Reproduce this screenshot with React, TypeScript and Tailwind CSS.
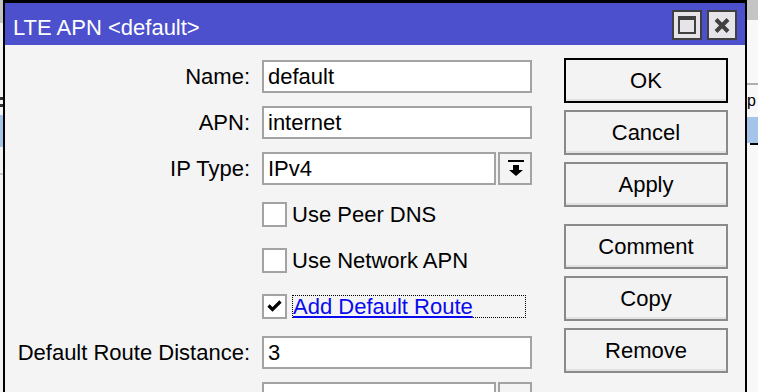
import React from 'react'

const font = { fontFamily: '"Liberation Sans", Arial, sans-serif' }

const Field = ({ value }: { value: string }) => (
  <div className="w-[270px] h-[33px] border-2 border-[#a3a3a3] bg-white flex items-center pl-[4px] pt-[1px] text-black">
    {value}
  </div>
)

const ComboField = ({ value, arrow = true }: { value: string; arrow?: boolean }) => (
  <div className="w-[270px] h-[33px] flex gap-[2px]">
    <div className="flex-1 h-full border-2 border-[#a3a3a3] bg-white flex items-center pl-[4px] pt-[1px] text-black">
      {value}
    </div>
    <div className="w-[34px] h-full border-2 border-[#a3a3a3] bg-[#f4f4f4] flex items-center justify-center">
      {arrow && (
        <svg width="16" height="16" viewBox="0 0 16 16" className="translate-x-[1px]">
          <rect x="0" y="0" width="16" height="2" fill="#000" />
          <rect x="5" y="5" width="6" height="5" fill="#000" />
          <path d="M1 10 H15 L8 16 Z" fill="#000" />
        </svg>
      )}
    </div>
  </div>
)

const Row = ({ label, children }: { label?: string; children: React.ReactNode }) => (
  <div className="h-[46px] flex items-center gap-[12px] shrink-0">
    <div className="w-[245px] text-right text-black whitespace-nowrap pt-[1px]">{label}</div>
    {children}
  </div>
)

const Check = ({ label, checked, focused }: { label: string; checked?: boolean; focused?: boolean }) => (
  <div className="flex items-center gap-[5px]">
    <div className="w-[25px] h-[25px] border-2 border-[#a3a3a3] bg-white flex items-center justify-center">
      {checked && (
        <svg width="15" height="12" viewBox="0 0 15 12">
          <path d="M1.5 5.5 L5.5 9.5 L13.5 1.5" stroke="#000" strokeWidth="3.2" fill="none" />
        </svg>
      )}
    </div>
    {focused ? (
      <div className="w-[234px] h-[23px] border border-dotted border-black flex items-center pt-[1px] text-[#0a0af0] underline underline-offset-2 whitespace-nowrap">
        {label}
      </div>
    ) : (
      <div className="text-black pt-[1px] whitespace-nowrap">{label}</div>
    )}
  </div>
)

const Btn = ({ children, primary, className = '' }: { children: React.ReactNode; primary?: boolean; className?: string }) => (
  <div
    className={`h-[45px] w-[164px] border-2 ${primary ? 'border-black' : 'border-[#8a8a8a]'} bg-[#f3f3f3] shadow-[inset_0_-2px_0_#e2e2e2] flex items-center justify-center pt-[1px] text-black ${className}`}
  >
    {children}
  </div>
)

export default function App() {
  return (
    <div className="w-[758px] h-[392px] overflow-hidden flex bg-[#f4f4f4] text-[22px] leading-none" style={font}>
      {/* desktop behind, left */}
      <div className="w-[3px] shrink-0 flex flex-col bg-[#f2f2f2]">
        <div className="h-[23px] bg-[#c4c4c4]" />
        <div className="h-[74px]" />
        <div className="h-[3px] bg-[#333]" />
        <div className="h-[4px]" />
        <div className="h-[3px] bg-[#333]" />
        <div className="h-[8px]" />
        <div className="h-[32px] bg-[#a6c3ea]" />
        <div className="h-[26px]" />
        <div className="h-[2px] bg-[#c8c8c8]" />
      </div>

      {/* window */}
      <div className="w-[744px] shrink-0 border-l-2 border-r-2 border-t-[3px] border-black flex flex-col">
        <div className="h-[42px] shrink-0 bg-[#4c50cc] flex items-start">
          <div className="flex-1 h-full flex items-center pl-[8px] pt-[7px] text-white whitespace-nowrap">LTE APN &lt;default&gt;</div>
          <div className="flex gap-[5px] mt-[7px] mr-[8px]">
            <div className="w-[30px] h-[30px] border-2 border-[#404040] bg-[#e6e4e8] flex items-center justify-center">
              <svg width="18" height="18" viewBox="0 0 18 18">
                <rect x="0" y="0" width="18" height="18" fill="#404040" />
                <rect x="2" y="4" width="14" height="12" fill="#e6e4e8" />
              </svg>
            </div>
            <div className="w-[30px] h-[30px] border-2 border-[#404040] bg-[#e6e4e8] flex items-center justify-center">
              <svg width="16" height="15" viewBox="0 0 16 15">
                <path d="M2 1.5 L14 13.5 M14 1.5 L2 13.5" stroke="#404040" strokeWidth="4" />
              </svg>
            </div>
          </div>
        </div>

        <div className="flex-1 flex bg-[#f4f4f4] overflow-hidden">
          {/* form */}
          <div className="flex flex-col pt-[8px]">
            <Row label="Name:">
              <Field value="default" />
            </Row>
            <Row label="APN:">
              <Field value="internet" />
            </Row>
            <Row label="IP Type:">
              <ComboField value="IPv4" />
            </Row>
            <Row>
              <Check label="Use Peer DNS" />
            </Row>
            <Row>
              <Check label="Use Network APN" />
            </Row>
            <Row>
              <Check label="Add Default Route" checked focused />
            </Row>
            <Row label="Default Route Distance:">
              <Field value="3" />
            </Row>
            <Row>
              <ComboField value="" arrow={false} />
            </Row>
          </div>

          {/* buttons */}
          <div className="ml-[32px] pt-[13px] flex flex-col gap-[7px]">
            <Btn primary>OK</Btn>
            <Btn>Cancel</Btn>
            <Btn>Apply</Btn>
            <Btn className="mt-[10px]">Comment</Btn>
            <Btn>Copy</Btn>
            <Btn>Remove</Btn>
          </div>
        </div>
      </div>

      {/* desktop behind, right */}
      <div className="flex-1 flex flex-col bg-[#f8f8f8] text-black">
        <div className="h-[20px] bg-[#c4c4c4]" />
        <div className="h-[63px]" />
        <div className="h-[2px] bg-[#b0b0b0]" />
        <div className="h-[32px] flex items-center text-[16px]">p</div>
        <div className="h-[26px] bg-[#a6c3ea]" />
        <div className="h-[2px] ml-[3px] bg-black" />
      </div>
    </div>
  )
}
